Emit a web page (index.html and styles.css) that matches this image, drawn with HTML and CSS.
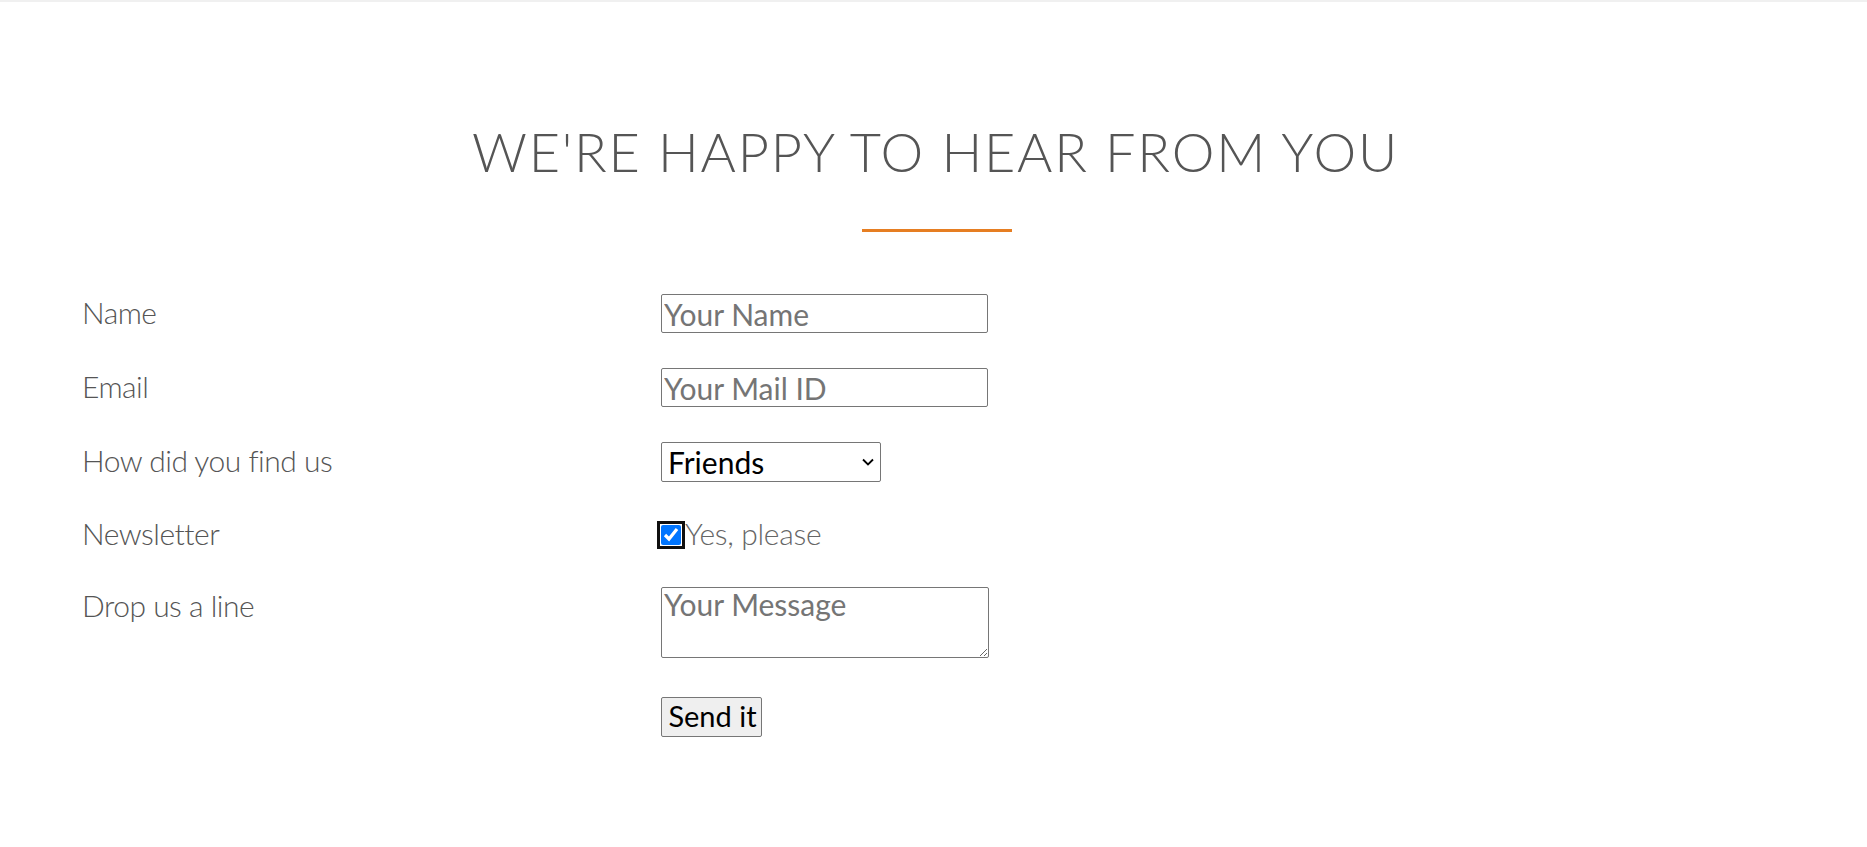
FILE: index.html
```html
<!DOCTYPE html>
<html lang="en">
<head>
<meta charset="utf-8">
<title>Contact</title>
<link rel="stylesheet" href="styles.css">
</head>
<body>
<div class="topbar"></div>
<section class="contact">
  <h2 class="contact-title">WE'RE HAPPY TO HEAR FROM YOU</h2>
  <div class="divider"></div>
  <form class="contact-form">
    <div class="row">
      <label class="row-label" for="name">Name</label>
      <div class="row-field"><input class="field text" id="name" type="text" placeholder="Your Name"></div>
    </div>
    <div class="row">
      <label class="row-label" for="email">Email</label>
      <div class="row-field"><input class="field text" id="email" type="email" placeholder="Your Mail ID"></div>
    </div>
    <div class="row">
      <label class="row-label" for="find">How did you find us</label>
      <div class="row-field">
        <div class="select-wrap">
          <select class="field select" id="find">
            <option>Friends</option>
            <option>Search engine</option>
            <option>Advertisement</option>
          </select>
          <svg class="chevron" width="12" height="8" viewBox="0 0 12 8" aria-hidden="true"><path d="M1 1.5 L6 6.5 L11 1.5" fill="none" stroke="#000" stroke-width="1.8"/></svg>
        </div>
      </div>
    </div>
    <div class="row row-check">
      <span class="row-label">Newsletter</span>
      <div class="row-field"><input class="check" id="news" type="checkbox" checked><label class="check-label" for="news">Yes, please</label></div>
    </div>
    <div class="row">
      <label class="row-label" for="msg">Drop us a line</label>
      <div class="row-field"><textarea class="field area" id="msg" placeholder="Your Message"></textarea></div>
    </div>
    <div class="row row-actions">
      <span class="row-label"></span>
      <div class="row-field"><button class="send" type="submit">Send it</button></div>
    </div>
  </form>
</section>
</body>
</html>
```

FILE: styles.css
```css
html, body {
  margin: 0;
  padding: 0;
  background: #ffffff;
}

body {
  font-family: Lato, "Noto Sans", sans-serif;
  color: #555555;
}

.topbar {
  height: 2px;
  background: #f0f0f0;
}

.contact {
  padding: 117px 0 80px;
}

.contact-title {
  margin: 0;
  padding-left: 4px;
  text-align: center;
  font-family: "Lato Light", Lato, sans-serif;
  font-size: 54px;
  font-weight: 300;
  line-height: normal;
  color: #555555;
  letter-spacing: 1.75px;
}

.divider {
  width: 150px;
  height: 3px;
  margin: 45px auto 0;
  background: #e67e22;
  position: relative;
  left: 3px;
}

.contact-form {
  margin-top: 62px;
  padding-left: 82px;
}

.row {
  display: grid;
  grid-template-columns: 579px 1fr;
  align-items: start;
  margin-bottom: 35px;
}

.row-label {
  font-family: "Lato Light", Lato, sans-serif;
  font-size: 30px;
  font-weight: 300;
  line-height: normal;
  letter-spacing: -0.5px;
  color: #555555;
}

.row-check {
  margin-bottom: 37px;
}

.row-check .row-label {
  line-height: 33px;
}

.row-actions {
  padding-top: 4px;
}

.field {
  font-family: Lato, "Noto Sans", sans-serif;
  font-size: 30px;
  box-sizing: border-box;
  margin: 0;
  border: 1px solid #767676;
  border-radius: 2px;
  color: #000000;
  background: #ffffff;
}

.field::placeholder {
  color: #757575;
}

.text {
  display: block;
  width: 327px;
  height: 39px;
  padding: 0 2px;
}

.select-wrap {
  position: relative;
  width: 220px;
}

.select {
  display: block;
  width: 220px;
  height: 40px;
  padding: 0 30px 0 6px;
  appearance: none;
  -webkit-appearance: none;
}

.chevron {
  position: absolute;
  right: 7px;
  top: 16px;
  pointer-events: none;
}

.area {
  display: block;
  width: 328px;
  height: 71px;
  padding: 0 2px;
  resize: both;
  line-height: 32px;
}

.row-field {
  font-size: 30px;
  line-height: 33px;
}

.check {
  width: 20px;
  height: 20px;
  margin: 0 4px 0 0;
  vertical-align: baseline;
  accent-color: #0075ff;
  outline: 3px solid #101010;
  outline-offset: 1px;
  border-radius: 3px;
}

.check-label {
  font-family: "Lato Light", Lato, sans-serif;
  font-size: 30px;
  font-weight: 300;
  letter-spacing: -0.3px;
  color: #666666;
}

.send {
  display: block;
  width: 101px;
  font-family: Lato, "Noto Sans", sans-serif;
  font-size: 29px;
  height: 40px;
  padding: 0 4px 4px 6px;
  margin: 0;
  color: #000000;
  background: #efefef;
  border: 1px solid #767676;
  border-radius: 2px;
  line-height: 33px;
}
```
